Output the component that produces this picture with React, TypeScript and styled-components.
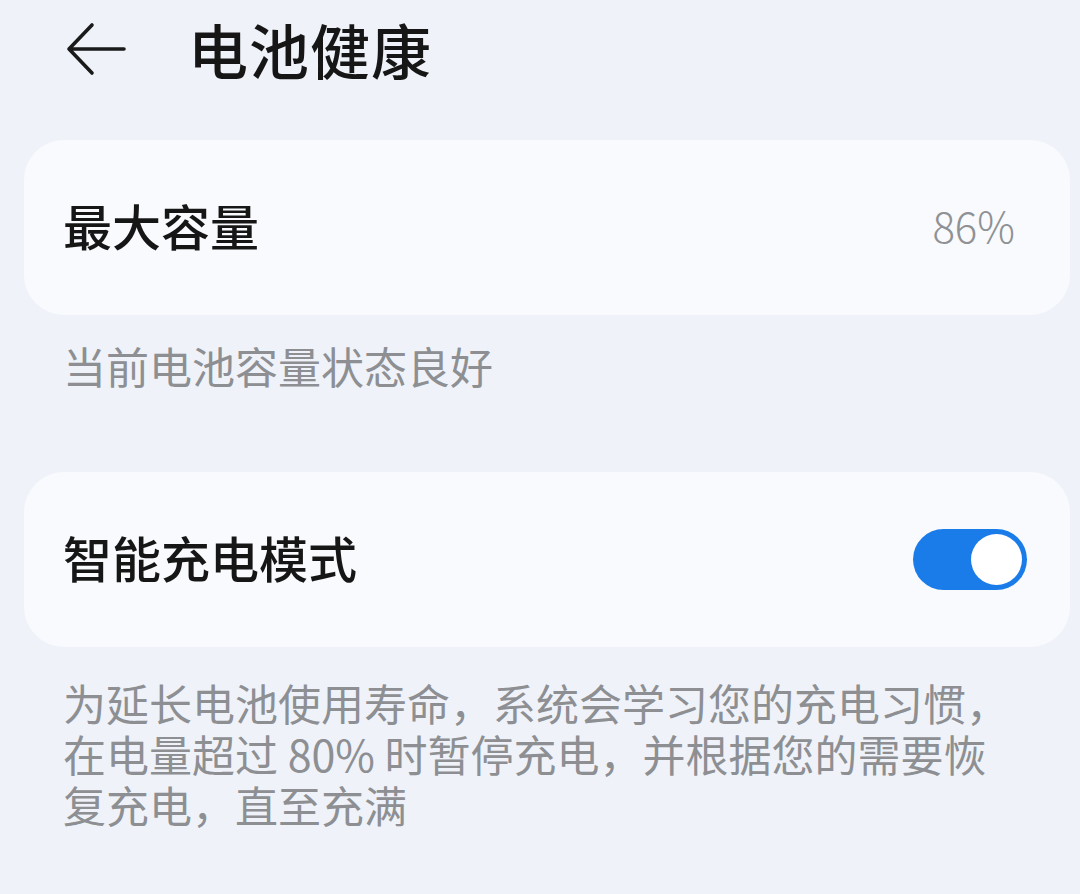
import React, { useState } from "react";
import styled, { createGlobalStyle } from "styled-components";

const GlobalStyle = createGlobalStyle`
  html, body {
    margin: 0;
    padding: 0;
    background: #eff3f9;
  }
  body {
    font-family: "Noto Sans CJK SC", "Noto Sans", sans-serif;
    color: #181818;
  }
`;

const Page = styled.div`
  width: 1080px;
  min-height: 894px;
  box-sizing: border-box;
  padding: 0 10px 0 24px;
  background: #eff3f9;
`;

const Header = styled.div`
  display: flex;
  align-items: center;
  height: 98px;
  padding-left: 40px;
  margin-bottom: 42px;
`;

const BackButton = styled.button`
  display: flex;
  align-items: center;
  justify-content: center;
  width: 64px;
  height: 64px;
  padding: 0;
  border: none;
  background: transparent;
  cursor: pointer;
`;

const Title = styled.h1`
  margin: 0 0 0 60px;
  font-size: 60px;
  font-weight: 500;
  line-height: 1;
  letter-spacing: 1px;
  color: #161616;
`;

const Card = styled.div<{ $padRight: number }>`
  display: flex;
  align-items: center;
  justify-content: space-between;
  height: 175px;
  box-sizing: border-box;
  padding: 0 ${(p) => p.$padRight}px 6px 39px;
  border-radius: 40px;
  background: #f8fafd;
`;

const Label = styled.span`
  font-size: 49px;
  font-weight: 500;
  color: #161616;
`;

const Value = styled.span`
  font-size: 42px;
  font-weight: 300;
  color: #8f9194;
`;

const Caption = styled.p`
  margin: 0;
  padding: 0 0 0 39px;
  font-size: 43px;
  font-weight: 400;
  line-height: 51px;
  color: #8d8f93;
  max-width: 960px;
`;

const Toggle = styled.button<{ $on: boolean }>`
  position: relative;
  width: 114px;
  height: 61px;
  margin-top: 6px;
  padding: 0;
  border: none;
  border-radius: 31px;
  background: ${(p) => (p.$on ? "#1a7ce9" : "#c8ccd2")};
  cursor: pointer;

  &::after {
    content: "";
    position: absolute;
    top: 5px;
    left: ${(p) => (p.$on ? "58px" : "5px")};
    width: 51px;
    height: 51px;
    border-radius: 50%;
    background: #ffffff;
  }
`;

const Section = styled.div<{ $gap: number }>`
  margin-bottom: ${(p) => p.$gap}px;
`;

const CaptionWrap = styled.div<{ $top: number }>`
  padding-top: ${(p) => p.$top}px;
`;

const App = () => {
  const [smart, setSmart] = useState(true);

  return (
    <>
      <GlobalStyle />
      <Page>
        <Header>
          <BackButton aria-label="返回">
            <svg width="60" height="54" viewBox="0 0 60 54" fill="none">
              <path
                d="M58 27H3M26 3L3 27L26 51"
                stroke="#1a1a1a"
                strokeWidth="3.6"
                strokeLinecap="round"
                strokeLinejoin="round"
              />
            </svg>
          </BackButton>
          <Title>电池健康</Title>
        </Header>

        <Section $gap={81}>
          <Card $padRight={55}>
            <Label>最大容量</Label>
            <Value>86%</Value>
          </Card>
          <CaptionWrap $top={25}>
            <Caption>当前电池容量状态良好</Caption>
          </CaptionWrap>
        </Section>

        <Section $gap={0}>
          <Card $padRight={43}>
            <Label>智能充电模式</Label>
            <Toggle $on={smart} onClick={() => setSmart(!smart)} aria-label="智能充电模式" />
          </Card>
          <CaptionWrap $top={30}>
            <Caption>
              为延长电池使用寿命，系统会学习您的充电习惯，在电量超过 80% 时暂停充电，并根据您的需要恢复充电，直至充满
            </Caption>
          </CaptionWrap>
        </Section>
      </Page>
    </>
  );
};

export default App;
